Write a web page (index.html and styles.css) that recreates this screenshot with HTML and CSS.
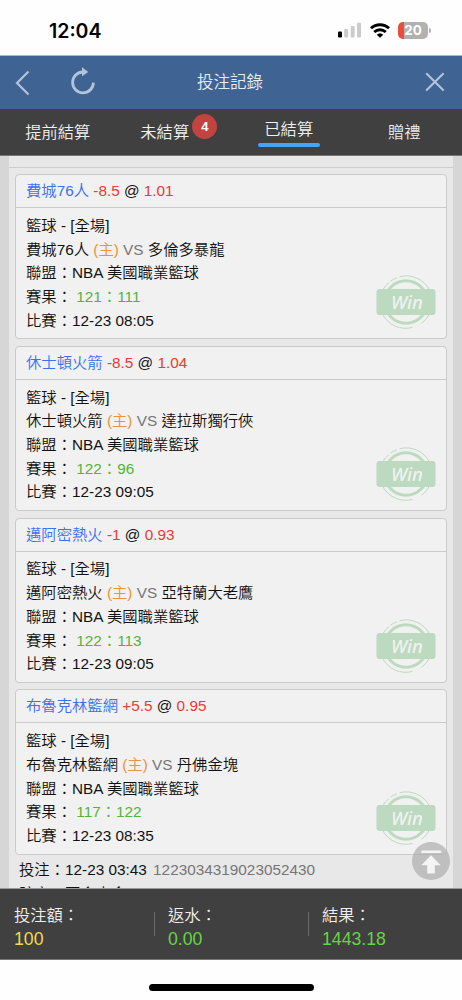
FILE: index.html
```html
<!DOCTYPE html>
<html lang="zh-TW">
<head>
    <meta charset="UTF-8">
    <meta name="viewport" content="width=device-width, initial-scale=1.0">
    <title>投注記錄</title>
    <link rel="stylesheet" href="styles.css">
</head>
<body>
    <!-- Shared stamp -->
    <svg class="defs" width="0" height="0">
        <symbol id="win-stamp" viewBox="0 0 60 54">
            <g fill="none" stroke="#bcdabf">
                <circle cx="30" cy="27" r="21.3" stroke-width="3"/>
                <path d="M23.5 1.8A26.2 26.2 0 0 1 53.5 15" stroke-width="1"/>
                <path d="M6.8 14.8A26.2 26.2 0 0 1 13 7.5M14.6 6.1A26.2 26.2 0 0 1 21 2.8" stroke-width="1"/>
                <path d="M6.5 39A26.2 26.2 0 0 0 36.5 52.4M45.5 48.4A26.2 26.2 0 0 0 53.5 39" stroke-width="1"/>
            </g>
            <rect x="0.5" y="14" width="59" height="26" rx="3" fill="#bcdabf"/>
        </symbol>
    </svg>

    <!-- Status Bar -->
    <div class="status-bar">
        <span class="clock">12:04</span>
        <div class="status-icons">
            <svg width="23" height="16" viewBox="0 0 23 16">
                <rect x="0" y="9.5" width="4" height="6" rx="1" fill="#000"/>
                <rect x="6.2" y="7" width="4" height="8.5" rx="1" fill="#cbcbcb"/>
                <rect x="12.7" y="4" width="4" height="11.5" rx="1" fill="#cbcbcb"/>
                <rect x="19" y="0.7" width="4" height="14.8" rx="1" fill="#cbcbcb"/>
            </svg>
            <svg class="wifi" width="20" height="15" viewBox="0 0 20 15">
                <g fill="none" stroke="#000" stroke-width="2.9">
                    <path d="M1 5.3a13 13 0 0 1 18 0"/>
                    <path d="M4.2 9a8.4 8.4 0 0 1 11.6 0"/>
                </g>
                <path d="M10 14.8L6.7 11.8a4.8 4.8 0 0 1 6.6 0z" fill="#000"/>
            </svg>
            <div class="battery">20</div>
            <div class="battery-tip"></div>
        </div>
    </div>

    <!-- Title Bar -->
    <div class="title-bar">
        <div class="title-left">
            <svg width="15" height="26" viewBox="0 0 15 26">
                <path d="M13.5 1.5L2 13l11.5 11.5" fill="none" stroke="#b3c3d9" stroke-width="2.2"/>
            </svg>
            <svg class="refresh" width="26" height="28" viewBox="0 0 26 28">
                <path d="M13 5A10.4 10.4 0 1 0 23.4 15.6" fill="none" stroke="#b3c3d9" stroke-width="2.8"/>
                <path d="M12 0.3L18.3 5L12 9.3z" fill="#b3c3d9"/>
            </svg>
        </div>
        <h1>投注記錄</h1>
        <svg class="close" width="20" height="20" viewBox="0 0 20 20">
            <path d="M1.2 1.2l17.4 17.4M18.6 1.2L1.2 18.6" fill="none" stroke="#b3c3d9" stroke-width="2.1"/>
        </svg>
    </div>

    <!-- Tabs -->
    <div class="tabs">
        <div class="tab">提前結算</div>
        <div class="tab unsettled"><span class="tab-label">未結算<b class="badge">4</b></span></div>
        <div class="tab active"><span class="tab-label">已結算</span></div>
        <div class="tab">贈禮</div>
    </div>

    <!-- Bet List -->
    <div class="content">
        <div class="panel">
            <div class="prev-end"></div>

            <div class="card">
                <div class="card-head"><span class="team">費城76人</span> <span class="odds">-8.5</span> @ <span class="odds">1.01</span></div>
                <div class="card-body">
                    <p>籃球 - [全場]</p>
                    <p>費城76人 <span class="home">(主)</span> <span class="vs">VS</span> 多倫多暴龍</p>
                    <p>聯盟：NBA 美國職業籃球</p>
                    <p>賽果： <span class="score">121：111</span></p>
                    <p>比賽：12-23 08:05</p>
                </div>
                <div class="stamp"><svg><use href="#win-stamp"/></svg><span>Win</span></div>
            </div>

            <div class="card">
                <div class="card-head"><span class="team">休士頓火箭</span> <span class="odds">-8.5</span> @ <span class="odds">1.04</span></div>
                <div class="card-body">
                    <p>籃球 - [全場]</p>
                    <p>休士頓火箭 <span class="home">(主)</span> <span class="vs">VS</span> 達拉斯獨行俠</p>
                    <p>聯盟：NBA 美國職業籃球</p>
                    <p>賽果： <span class="score">122：96</span></p>
                    <p>比賽：12-23 09:05</p>
                </div>
                <div class="stamp"><svg><use href="#win-stamp"/></svg><span>Win</span></div>
            </div>

            <div class="card">
                <div class="card-head"><span class="team">邁阿密熱火</span> <span class="odds">-1</span> @ <span class="odds">0.93</span></div>
                <div class="card-body">
                    <p>籃球 - [全場]</p>
                    <p>邁阿密熱火 <span class="home">(主)</span> <span class="vs">VS</span> 亞特蘭大老鷹</p>
                    <p>聯盟：NBA 美國職業籃球</p>
                    <p>賽果： <span class="score">122：113</span></p>
                    <p>比賽：12-23 09:05</p>
                </div>
                <div class="stamp"><svg><use href="#win-stamp"/></svg><span>Win</span></div>
            </div>

            <div class="card">
                <div class="card-head"><span class="team">布魯克林籃網</span> <span class="odds">+5.5</span> @ <span class="odds">0.95</span></div>
                <div class="card-body">
                    <p>籃球 - [全場]</p>
                    <p>布魯克林籃網 <span class="home">(主)</span> <span class="vs">VS</span> 丹佛金塊</p>
                    <p>聯盟：NBA 美國職業籃球</p>
                    <p>賽果： <span class="score">117：122</span></p>
                    <p>比賽：12-23 08:35</p>
                </div>
                <div class="stamp"><svg><use href="#win-stamp"/></svg><span>Win</span></div>
            </div>

            <div class="bet-info">
                <p>投注：12-23 03:43 <span class="bet-id">1223034319023052430</span></p>
                <p>賠率：不含本金</p>
            </div>
        </div>

        <!-- Back to top -->
        <svg class="to-top" width="38" height="38" viewBox="0 0 38 38">
            <circle cx="19" cy="19" r="19" fill="#a9a9a9" fill-opacity="0.65"/>
            <path d="M10.5 9.7h17.6" stroke="#f4f4f4" stroke-width="2.6" stroke-linecap="round"/>
            <path d="M19 13.2L28.8 23.2H22.8V31.5H15.2V23.2H9.2z" fill="#f4f4f4"/>
        </svg>
    </div>

    <!-- Totals -->
    <div class="totals">
        <div class="total"><span>投注額：</span><span class="stake">100</span></div>
        <div class="total"><span>返水：</span><span class="gain">0.00</span></div>
        <div class="total"><span>結果：</span><span class="gain">1443.18</span></div>
    </div>

    <div class="home-area"><div class="home-bar"></div></div>
</body>
</html>
```

FILE: styles.css
```css
/* Global styles */
* {
    box-sizing: border-box;
}

body {
    margin: 0;
    height: 1000px;
    display: flex;
    flex-direction: column;
    overflow: hidden;
    background: #fefefe;
    color: #111;
    font-family: "Liberation Sans", "Noto Sans CJK TC", sans-serif;
    font-size: 15.33px;
    font-weight: 350;
}

p {
    margin: 0;
}

.defs {
    position: absolute;
}

/* Status bar */
.status-bar {
    height: 56px;
    flex: none;
    display: flex;
    justify-content: space-between;
    padding: 0 34px 0 49px;
    border-bottom: 1px solid #a8bad2;
}

.clock {
    padding-top: 19px;
    font-family: "Inter", sans-serif;
    font-size: 19.5px;
    font-weight: 600;
    line-height: 25px;
    color: #000;
}

.status-icons {
    display: flex;
    align-items: flex-start;
    padding-top: 22px;
}

.wifi {
    margin: 0.5px 8px 0 9px;
}

.battery {
    width: 30px;
    height: 17px;
    border-radius: 5px;
    background: linear-gradient(90deg, #eb4d3d 6px, #b1b1b1 6px);
    color: #fff;
    font-family: "Inter", sans-serif;
    font-size: 13.5px;
    font-weight: 700;
    line-height: 17px;
    text-align: center;
}

.battery-tip {
    width: 2px;
    height: 5px;
    margin: 6px -3px 0 1px;
    border-radius: 0 2px 2px 0;
    background: #b1b1b1;
}

/* Title bar */
.title-bar {
    height: 53px;
    flex: none;
    display: grid;
    grid-template-columns: 1fr auto 1fr;
    align-items: center;
    padding: 0 17px 0 15px;
    background: #3f6494;
    color: #e8edf4;
}

.title-left {
    display: flex;
    align-items: center;
}

.refresh {
    margin: -4px 0 0 40px;
}

h1 {
    margin: -3px 0 0;
    font-size: 16.5px;
    font-weight: 350;
}

.close {
    justify-self: end;
    margin-top: -1px;
}

/* Tabs */
.tabs {
    height: 47px;
    flex: none;
    display: grid;
    grid-template-columns: repeat(4, 1fr);
    background: #404040;
    color: #f0f0f0;
    font-size: 16.3px;
    line-height: 47px;
    border-bottom: 1px solid #777;
}

.tab {
    text-align: center;
}

.unsettled {
    padding-right: 17px;
}

.tab-label {
    position: relative;
}

.active {
    display: flex;
    justify-content: center;
}

.active .tab-label {
    width: 62px;
    height: 38px;
    line-height: 40px;
}

.active .tab-label::after {
    content: "";
    position: absolute;
    left: 0;
    bottom: 0;
    width: 62px;
    height: 4px;
    border-radius: 2px;
    background: #45a4f5;
}

.badge {
    position: absolute;
    left: 52px;
    top: -9px;
    width: 25px;
    height: 25px;
    border-radius: 50%;
    background: #c24340;
    color: #fff;
    font-size: 13px;
    font-weight: bold;
    line-height: 25px;
}

/* List */
.content {
    position: relative;
    flex: 1;
    min-height: 0;
    padding: 0 9px;
    background: #d6d6d6;
    overflow: hidden;
}

.panel {
    height: 100%;
    overflow: hidden;
    background: #e8e8e8;
}

.prev-end {
    height: 11.5px;
    margin-bottom: 6.5px;
    border-bottom: 1px solid #cdcdcd;
}

.card {
    position: relative;
    height: 165.3px;
    margin: 0 6px 6.5px;
    border: 1px solid #cacaca;
    border-radius: 4px;
    background: #f1f1f1;
}

.card-head {
    height: 33px;
    padding-left: 10px;
    border-bottom: 1px solid #cacaca;
    line-height: 32px;
}

.card-body {
    padding: 5.8px 0 0 10px;
    line-height: 23.7px;
}

.team {
    color: #3b6ff0;
}

.odds {
    color: #ec3a30;
}

.home {
    color: #f09035;
}

.vs,
.bet-id {
    color: #767676;
}

.score {
    color: #55b33a;
}

/* Win stamp */
.stamp {
    position: absolute;
    right: 10px;
    bottom: 9px;
    width: 60px;
    height: 54px;
}

.stamp svg {
    display: block;
    width: 60px;
    height: 54px;
}

.stamp span {
    position: absolute;
    inset: 14px 0 auto 2px;
    color: #f1f1f1;
    font-family: "Noto Sans", sans-serif;
    font-size: 18.5px;
    font-style: italic;
    font-weight: 500;
    line-height: 25px;
    text-align: center;
}

.bet-info {
    padding-left: 10px;
    line-height: 23.7px;
    margin-top: -3px;
}

.bet-id {
    margin-left: 2px;
}

.to-top {
    position: absolute;
    right: 12px;
    bottom: 8px;
}

/* Totals */
.totals {
    height: 72px;
    flex: none;
    display: flex;
    align-items: center;
    padding-top: 5px;
    background: #404040;
    color: #f0f0f0;
    border-bottom: 1px solid #777;
    border-top: 1px solid #999;
}

.total {
    position: relative;
    width: 154px;
    padding-left: 14px;
    display: flex;
    flex-direction: column;
    font-size: 16.3px;
    line-height: 24px;
}

.total + .total::before {
    content: "";
    position: absolute;
    left: 0;
    top: 9px;
    width: 1px;
    height: 24px;
    background: #6a6a6a;
}

.stake,
.gain {
    font-size: 17.7px;
}

.stake {
    color: #f2d94a;
}

.gain {
    color: #65d545;
}

/* Home indicator */
.home-area {
    height: 40px;
    flex: none;
    display: flex;
    justify-content: center;
    padding-top: 24px;
}

.home-bar {
    width: 165px;
    height: 7px;
    border-radius: 4px;
    background: #000;
}
```
